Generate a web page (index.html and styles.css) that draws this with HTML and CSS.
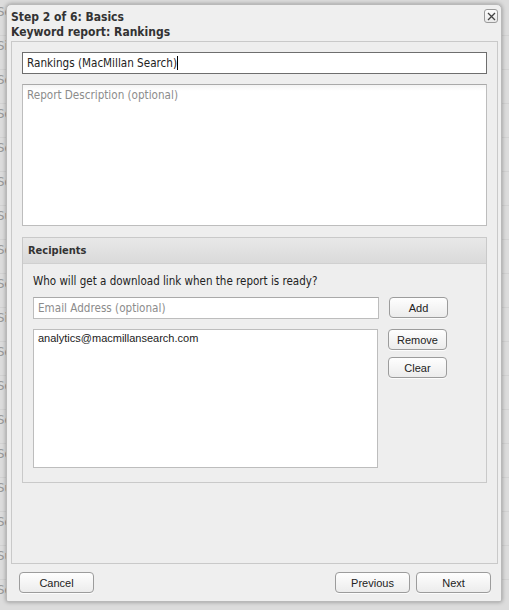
FILE: index.html
```html
<!DOCTYPE html>
<html lang="en">
  <head>
    <meta charset="UTF-8" />
    <meta name="viewport" content="width=device-width, initial-scale=1.0" />
    <title>Keyword report: Rankings</title>
    <link rel="stylesheet" href="styles.css">
  </head>
  <body>
    <div class="page">
      <div class="page-row">Search visibility</div>
      <div class="page-row">Site audit</div>
      <div class="page-row">Search terms</div>
      <div class="page-row">Social</div>
      <div class="page-row">Search engines</div>
      <div class="page-row">Sources</div>
      <div class="page-row">Summary</div>
      <div class="page-row">Settings</div>
      <div class="page-row">Search visibility</div>
      <div class="page-row">Site audit</div>
      <div class="page-row">Search terms</div>
      <div class="page-row">Social</div>
      <div class="page-row">Search engines</div>
      <div class="page-row">Sources</div>
      <div class="page-row">Summary</div>
      <div class="page-row">Settings</div>
      <div class="page-row">Summary</div>
      <div class="page-row">Settings</div>
    </div>

    <div class="dialog">
      <div class="dialog-header">
        <div class="dialog-title">
          Step 2 of 6: Basics<br />
          Keyword report: Rankings
        </div>
        <button class="dialog-close" title="Close">
          <svg width="9" height="9" viewBox="0 0 9 9">
            <path d="M1 1 L8 8 M8 1 L1 8" stroke="#444" stroke-width="1.3" fill="none" />
          </svg>
        </button>
      </div>

      <div class="dialog-body">
        <div class="field field-name">Rankings (MacMillan Search)<span class="caret"></span></div>
        <textarea class="field field-desc" placeholder="Report Description (optional)"></textarea>

        <div class="recipients">
          <div class="recipients-head">Recipients</div>
          <div class="recipients-body">
            <p class="recipients-hint">Who will get a download link when the report is ready?</p>
            <div class="recipients-row">
              <input type="text" class="field field-email" placeholder="Email Address (optional)" />
              <button class="btn btn-side">Add</button>
            </div>
            <div class="recipients-row recipients-row-list">
              <div class="recipient-list">
                <div class="recipient-item">analytics@macmillansearch.com</div>
              </div>
              <div class="side-buttons">
                <button class="btn btn-side">Remove</button>
                <button class="btn btn-side">Clear</button>
              </div>
            </div>
          </div>
        </div>
      </div>

      <div class="dialog-footer">
        <button class="btn btn-wide">Cancel</button>
        <div class="footer-right">
          <button class="btn btn-wide">Previous</button>
          <button class="btn btn-wide">Next</button>
        </div>
      </div>
    </div>
  </body>
</html>
```

FILE: styles.css
```css
body {
  margin: 0;
  background-color: #dcdcdc;
  font-family: "DejaVu Sans Condensed", "DejaVu Sans", sans-serif;
  font-size: 11px;
  color: #222;
  overflow: hidden;
}

.page {
  padding-top: 2px;
}

.page-row {
  height: 33px;
  line-height: 20px;
  margin-left: -3px;
  font-size: 13px;
  color: #999;
  border-bottom: 1px solid #d2d2d2;
}

.dialog {
  position: absolute;
  top: 4px;
  left: 6px;
  width: 494px;
  height: 596px;
  display: flex;
  flex-direction: column;
  background-color: #efefef;
  border: 1px solid #b9b9b9;
  border-radius: 5px 5px 2px 2px;
  box-shadow: 0 0 4px rgba(0, 0, 0, 0.35);
}

.dialog-header {
  position: relative;
  padding: 5px 4px 0 4px;
  height: 31px;
}

.dialog-title {
  font-weight: bold;
  font-size: 12px;
  line-height: 15px;
  color: #333;
}

.dialog-close {
  position: absolute;
  top: 4px;
  right: 3px;
  width: 14px;
  height: 14px;
  padding: 0;
  display: flex;
  align-items: center;
  justify-content: center;
  background: linear-gradient(#fdfdfd, #e9e9e9);
  border: 1px solid #9a9a9a;
  border-radius: 3px;
}

.dialog-body {
  flex: 1;
  margin: 0 3px 0 4px;
  padding: 10px;
  background-color: #eeeeee;
  border: 1px solid #c9c9c9;
  display: flex;
  flex-direction: column;
}

.field {
  box-sizing: border-box;
  font-family: "DejaVu Sans Condensed", "DejaVu Sans", sans-serif;
  font-size: 11.6px;
  background-color: #fff;
  border: 1px solid #bdbdbd;
  margin: 0;
  color: #222;
}

.field::placeholder {
  color: #8c8c8c;
}

.field-name {
  height: 22px;
  line-height: 20px;
  padding: 0 4px;
  border-color: #6e6e6e;
}

.caret {
  display: inline-block;
  width: 1px;
  height: 14px;
  background-color: #000;
  vertical-align: -3px;
}

.field-desc {
  display: block;
  width: 100%;
  height: 142px;
  margin-top: 10px;
  padding: 3px 4px;
  resize: none;
  border-top-color: #a9a9a9;
  background: linear-gradient(#f4f4f4, #fff 6px);
}

.recipients {
  margin-top: 11px;
  border: 1px solid #c9c9c9;
  background-color: #eeeeee;
}

.recipients-head {
  height: 25px;
  line-height: 25px;
  padding-left: 5px;
  font-weight: bold;
  color: #333;
  background: linear-gradient(#e8e8e8, #dadada);
  border-bottom: 1px solid #d0d0d0;
}

.recipients-body {
  padding: 9px 10px 14px 10px;
}

.recipients-hint {
  margin: 0 0 8px 0;
  font-size: 11.5px;
  line-height: 16px;
  color: #222;
}

.recipients-row {
  display: flex;
  gap: 10px;
  align-items: flex-start;
}

.recipients-row-list {
  margin-top: 10px;
}

.field-email {
  width: 346px;
  height: 22px;
  padding: 0 4px;
  border-top-color: #a9a9a9;
}

.recipient-list {
  box-sizing: border-box;
  width: 345px;
  height: 139px;
  padding: 2px 4px;
  background-color: #fff;
  border: 1px solid #bdbdbd;
  font-family: "Liberation Sans", Arial, sans-serif;
  font-size: 11px;
}

.side-buttons {
  display: flex;
  flex-direction: column;
  gap: 7px;
}

.btn {
  box-sizing: border-box;
  height: 21px;
  padding: 0;
  font-family: "Liberation Sans", Arial, sans-serif;
  font-size: 11px;
  color: #222;
  background: linear-gradient(#fefefe, #ececec);
  border: 1px solid #9c9c9c;
  border-radius: 4px;
  box-shadow: 0 1px 0 rgba(255, 255, 255, 0.8);
}

.btn-side {
  width: 59px;
}

.btn-wide {
  width: 75px;
}

.dialog-footer {
  display: flex;
  justify-content: space-between;
  padding: 8px 10px 8px 12px;
}

.footer-right {
  display: flex;
  gap: 6px;
}
```
